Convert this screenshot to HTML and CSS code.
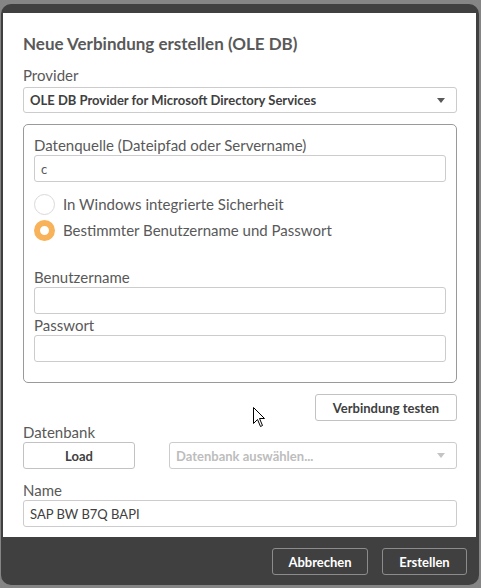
FILE: index.html
```html
<!DOCTYPE html>
<html lang="de">
<head>
<meta charset="utf-8">
<title>Neue Verbindung erstellen (OLE DB)</title>
<link rel="stylesheet" href="styles.css">
</head>
<body>
<div class="dialog">
  <div class="content">
    <h1 class="title">Neue Verbindung erstellen (OLE DB)</h1>
    <div class="label label-provider">Provider</div>
    <div class="select">
      <span class="select-text">OLE DB Provider for Microsoft Directory Services</span>
      <span class="caret"></span>
    </div>
    <div class="group">
      <div class="label">Datenquelle (Dateipfad oder Servername)</div>
      <div class="input"><span class="input-text">c</span></div>
      <div class="radios">
        <div class="radio-row"><span class="radio"></span><span class="radio-label">In Windows integrierte Sicherheit</span></div>
        <div class="radio-row"><span class="radio checked"></span><span class="radio-label">Bestimmter Benutzername und Passwort</span></div>
      </div>
      <div class="label label-user">Benutzername</div>
      <div class="input"></div>
      <div class="label label-pass">Passwort</div>
      <div class="input"></div>
    </div>
    <div class="test-row">
      <button class="btn">Verbindung testen</button>
    </div>
    <div class="label label-db">Datenbank</div>
    <div class="db-row">
      <button class="btn btn-load">Load</button>
      <div class="select select-db">
        <span class="select-text placeholder">Datenbank auswählen...</span>
        <span class="caret light"></span>
      </div>
    </div>
    <div class="label label-name">Name</div>
    <div class="input"><span class="input-text name-text">SAP BW B7Q BAPI</span></div>
  </div>
  <div class="footer">
    <button class="btn btn-dark btn-cancel">Abbrechen</button>
    <button class="btn btn-dark btn-create">Erstellen</button>
  </div>
  <svg class="cursor" width="13" height="21" viewBox="0 0 13 21">
    <path d="M0.5 0.5 L0.5 16.5 L4.5 12.5 L7.5 19.5 L9.5 18.5 L6.5 11.5 L11.5 11.5 Z" fill="#fff" stroke="#000" stroke-width="1"/>
  </svg>
</div>
</body>
</html>
```

FILE: styles.css
```css
* { box-sizing: border-box; }
html, body { margin: 0; padding: 0; }
body {
  background: #858585;
  width: 481px;
  height: 588px;
  padding: 4px 2px 0 1px;
  font-family: Lato, "Liberation Sans", sans-serif;
  color: #595959;
}
.dialog {
  position: relative;
  width: 478px;
  height: 581px;
  background: #404040;
  border-radius: 10px;
  padding: 9px 3px 0 2px;
  display: flex;
  flex-direction: column;
}
.content {
  background: #fff;
  height: 524px;
  padding: 21px 19px 0 20px;
  display: flex;
  flex-direction: column;
}
.title {
  margin: 0;
  font-size: 17px;
  line-height: 20px;
  font-weight: 700;
  color: #595959;
}
.label {
  font-size: 15px;
  line-height: 18px;
  color: #595959;
}
.label-provider { margin-top: 12px; }
.select {
  margin-top: 3px;
  height: 26px;
  border: 1px solid #cccccc;
  border-radius: 3px;
  display: flex;
  align-items: center;
  justify-content: space-between;
  padding: 0 11px 0 6px;
}
.select-text {
  font-size: 13px;
  font-weight: 700;
  color: #404040;
}
.select-text.placeholder { color: #bdbdbd; }
.caret {
  width: 0; height: 0;
  border-left: 4px solid transparent;
  border-right: 4px solid transparent;
  border-top: 5px solid #595959;
}
.caret.light { border-top-color: #c4c4c4; }
.group {
  margin-top: 11px;
  border: 1px solid #9a9a9a;
  border-radius: 5px;
  padding: 11px 10px 20px 10px;
  display: flex;
  flex-direction: column;
}
.input {
  margin-top: 1px;
  height: 27px;
  border: 1px solid #cccccc;
  border-radius: 3px;
  display: flex;
  align-items: center;
  padding: 0 6px;
}
.input-text {
  font-size: 13px;
  color: #595959;
}
.name-text { font-size: 13px; color: #404040; }
.radios {
  margin-top: 9px;
  display: flex;
  flex-direction: column;
}
.radio-row {
  height: 26px;
  display: flex;
  align-items: center;
  gap: 8px;
}
.radio {
  width: 21px;
  height: 21px;
  border-radius: 50%;
  border: 1px solid #d9d9d9;
  background: #fff;
}
.radio.checked {
  border: 6px solid #f8b25a;
}
.radio-label {
  font-size: 15px;
  color: #595959;
}
.label-user { margin-top: 25px; }
.label-pass { margin-top: 2px; }
.test-row {
  margin-top: 11px;
  display: flex;
  justify-content: flex-end;
}
.btn {
  font-family: Lato, "Liberation Sans", sans-serif;
  height: 27px;
  background: #fff;
  border: 1px solid #c2c2c2;
  border-radius: 3px;
  font-size: 13px;
  font-weight: 700;
  color: #404040;
  padding: 0;
  cursor: default;
}
.test-row .btn { width: 142px; }
.label-db { margin-top: 2px; }
.db-row {
  margin-top: 1px;
  display: flex;
  gap: 34px;
}
.btn-load { width: 112px; flex: none; }
.select-db { margin-top: 0; flex: 1; height: 27px; }
.label-name { margin-top: 12px; }
.footer {
  flex: 1;
  display: flex;
  justify-content: flex-end;
  align-items: flex-start;
  gap: 14px;
  padding: 11px 9px 0 0;
}
.btn-dark {
  background: #404040;
  border-color: #8c8c8c;
  color: #ffffff;
}
.btn-cancel { width: 96px; }
.btn-create { width: 85px; }
.cursor {
  position: absolute;
  left: 252px;
  top: 403px;
}
```
